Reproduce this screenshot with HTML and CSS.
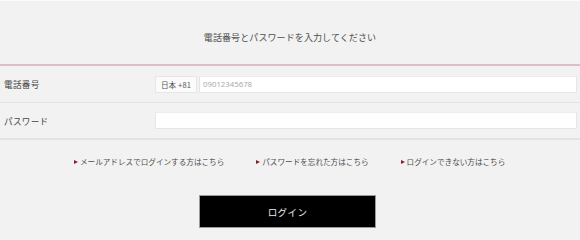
FILE: index.html
```html
<!DOCTYPE html>
<html lang="ja">
<head>
<meta charset="utf-8">
<link rel="stylesheet" href="styles.css">
</head>
<body>
<div class="page">
  <header class="head">
    <p class="title">電話番号とパスワードを入力してください</p>
  </header>
  <div class="form">
    <div class="row">
      <label class="label">電話番号</label>
      <div class="field">
        <span class="country">日本 +81</span>
        <span class="input placeholder">09012345678</span>
      </div>
    </div>
    <div class="row row-last">
      <label class="label">パスワード</label>
      <div class="field">
        <span class="input"></span>
      </div>
    </div>
  </div>
  <nav class="links">
    <a class="link l1">メールアドレスでログインする方はこちら</a>
    <a class="link l2">パスワードを忘れた方はこちら</a>
    <a class="link l3">ログインできない方はこちら</a>
  </nav>
  <div class="actions">
    <button class="btn">ログイン</button>
  </div>
</div>
</body>
</html>
```
FILE: styles.css
```css
* { box-sizing: border-box; }
html, body { margin: 0; padding: 0; }
body {
  background: #f2f2f2;
  font-family: "Noto Sans CJK JP", "Noto Sans", sans-serif;
  color: #4a4a4a;
  width: 580px;
  height: 239px;
  overflow: hidden;
}
.page { width: 580px; border-top: 1px solid #fafafa; }
.head {
  height: 65px;
  display: flex;
  align-items: center;
  justify-content: center;
  border-bottom: 2px solid #dcbfc6;
}
.title {
  margin: 10px 0 0 0;
  font-size: 9px;
  letter-spacing: 0.1px;
  color: #4d4d4d;
  line-height: 1;
}
.row {
  display: flex;
  align-items: center;
  height: 37px;
  border-bottom: 1px solid #e3e3e3;
}
.row-last { border-bottom: 2px solid #e3e3e3; height: 37px; }
.label {
  width: 155px;
  padding-left: 4px;
  font-size: 8.6px;
  letter-spacing: 0.3px;
  color: #444;
}
.field {
  display: flex;
  width: 422px;
  height: 17px;
  gap: 2px;
}
.country {
  width: 42px;
  height: 17px;
  background: #fbfbfb;
  border: 1px solid #e6e6e6;
  font-family: "Noto Sans CJK JP", "Noto Sans", sans-serif;
  font-size: 7.6px;
  letter-spacing: 0.1px;
  color: #555;
  display: flex;
  align-items: center;
  justify-content: center;
}
.input {
  flex: 1;
  height: 17px;
  background: #fff;
  border: 1px solid #e6e6e6;
  border-top-color: #ececec;
}
.placeholder {
  font-family: "Noto Sans", sans-serif;
  font-size: 7.8px;
  color: #aaa;
  display: flex;
  align-items: center;
  padding-left: 3px;
}
.links {
  display: flex;
  height: 40px;
  align-items: center;
  padding-top: 4px;
}
.link {
  position: relative;
  font-size: 7.6px;
  color: #4d4d4d;
  padding-left: 6px;
  line-height: 1;
}
.link::before {
  content: "";
  position: absolute;
  left: 0;
  top: 50%;
  margin-top: -2.5px;
  border-left: 4px solid #8a1c2c;
  border-top: 2.5px solid transparent;
  border-bottom: 2.5px solid transparent;
}
.l1 { margin-left: 74px; }
.l2 { margin-left: 32px; }
.l3 { margin-left: 32px; }
.actions {
  display: flex;
  padding-left: 199px;
  padding-top: 15px;
}
.btn {
  width: 177px;
  height: 33px;
  background: #000;
  color: #eee;
  border: 1px solid #9a9a9a;
  font-family: "Noto Sans CJK JP", sans-serif;
  font-size: 9.5px;
  letter-spacing: 0.4px;
  padding: 0;
}
```
